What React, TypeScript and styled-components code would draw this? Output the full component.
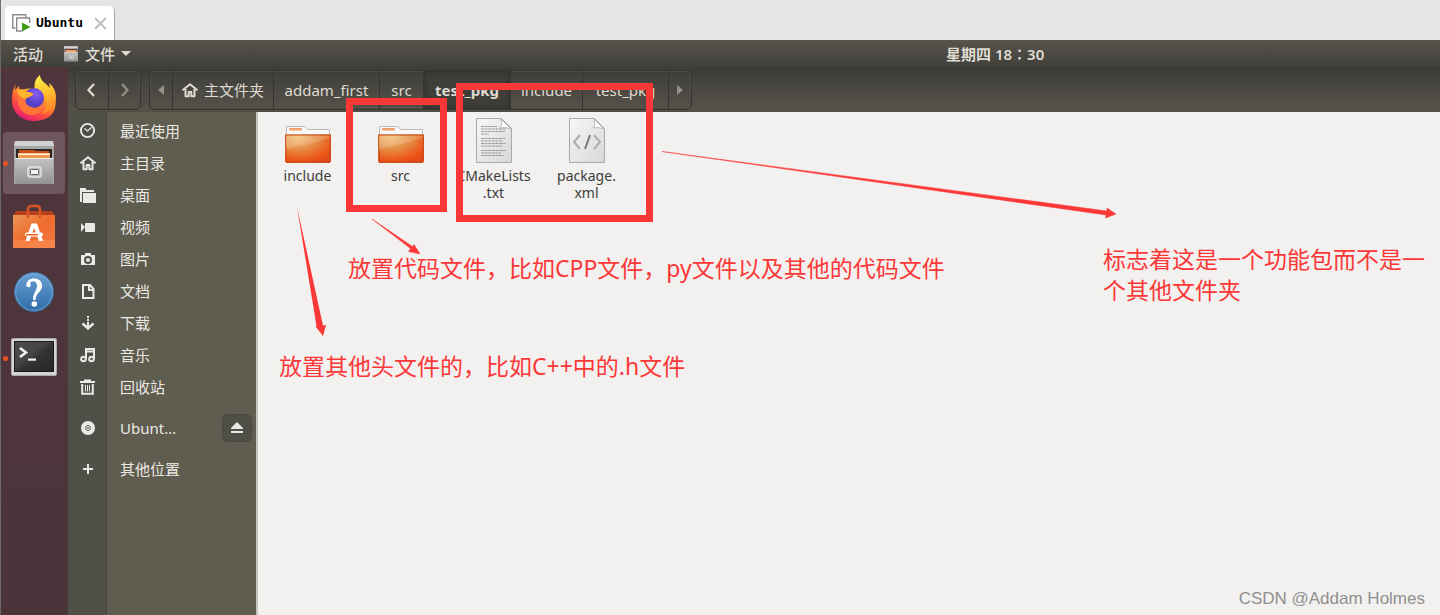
import React from "react";
import styled, { createGlobalStyle } from "styled-components";

const GlobalStyle = createGlobalStyle`
  * { box-sizing: border-box; }
  body { margin: 0; background: #f2f1ef; }
  button { border: 0; padding: 0; background: none; color: inherit; font: inherit; }
  svg { display: block; flex: none; overflow: visible; }
`;

const uiFont = `"Noto Sans", "Noto Sans CJK SC", sans-serif`;
const red = "#fc3737";

const Page = styled.div`
  position: relative;
  min-height: 100vh;
  display: flex;
  flex-direction: column;
  overflow: hidden;
  font: 15px/20px ${uiFont};
`;

const TabStrip = styled.div`
  height: 40px;
  padding: 6px 0 0 4px;
  display: flex;
  background: #e4e5e7;
  border-left: 1px solid #6e6e70;
`;

const Tab = styled.div`
  display: flex;
  align-items: center;
  width: 110px;
  padding: 0 8px 0 7px;
  background: #fff;
  border-right: 1px solid #a9aaac;
  border-radius: 5px 5px 0 0;
  color: #000;
  font: bold 13px/20px "DejaVu Sans Mono", monospace;
`;

const TabName = styled.span`
  flex: 1;
  margin-left: 4px;
`;

const Desktop = styled.div`
  flex: 1;
  display: flex;
  flex-direction: column;
  border-left: 1px solid #6a6864;
`;

const TopBar = styled.header`
  display: flex;
  align-items: center;
  height: 27px;
  background: linear-gradient(#57544b, #403f3b);
  color: #dfdbd2;
  font-weight: 500;
`;

const TopLeft = styled.div`
  display: flex;
  align-items: center;
  flex: 0 0 945px;
  padding-left: 12px;
  gap: 20px;
`;

const TopButton = styled.button`
  display: flex;
  align-items: center;
  gap: 6px;
  white-space: nowrap;
`;

const Clock = styled.time`
  font-weight: 600;
  white-space: nowrap;
`;

const Workspace = styled.div`
  flex: 1;
  display: flex;
`;

const Dock = styled.nav`
  flex: none;
  width: 67px;
  padding-left: 2px;
  display: flex;
  flex-direction: column;
  gap: 3px;
  background: linear-gradient(#50363c, #4b343a);
`;

const DockButton = styled.button<{ $open?: boolean; $active?: boolean }>`
  position: relative;
  display: flex;
  align-items: center;
  justify-content: center;
  width: 62px;
  height: 62px;
  border-radius: 4px;
  background: ${(p) => (p.$active ? "#6d575c" : "transparent")};
  &::before {
    content: "";
    display: ${(p) => (p.$open ? "block" : "none")};
    position: absolute;
    left: 0;
    width: 5px;
    height: 5px;
    border-radius: 50%;
    background: #e95420;
  }
`;

const FilesWindow = styled.section`
  flex: 1;
  min-width: 0;
  display: flex;
  flex-direction: column;
`;

const HeaderBar = styled.div`
  display: flex;
  gap: 8px;
  height: 45px;
  padding: 3px 7px;
  background: linear-gradient(#3d3c38, #56534b);
  border-bottom: 1px solid #4f4d46;
`;

const ButtonGroup = styled.div`
  display: flex;
  height: 40px;
  border: 1px solid #35342f;
  border-radius: 5px;
  box-shadow: inset 0 0 0 1px #504e46;
  overflow: hidden;
`;

const HeaderButton = styled.button<{ $width: number; $current?: boolean; $dim?: boolean }>`
  display: flex;
  align-items: center;
  justify-content: center;
  gap: 6px;
  width: ${(p) => p.$width}px;
  color: ${(p) => (p.$dim ? "#95928a" : "#dfdbd2")};
  background: ${(p) => (p.$current ? "#3e3d38" : "transparent")};
  box-shadow: ${(p) => (p.$current ? "inset 0 0 4px 1px #32312d" : "none")};
  font-weight: ${(p) => (p.$current ? 700 : 400)};
  white-space: nowrap;
  & + & { border-left: 1px solid #35342f; }
`;

const WindowBody = styled.div`
  flex: 1;
  display: flex;
`;

const Sidebar = styled.nav`
  flex: none;
  width: 190px;
  padding-top: 3px;
  display: flex;
  flex-direction: column;
  color: #ebe9e3;
  background: linear-gradient(90deg, #504f48 38px, #484740 38px, #484740 39px, #5f5c50 39px);
  border-right: 2px solid #c8c5c0;
`;

const PlaceRow = styled.div<{ $spaced?: boolean }>`
  display: flex;
  align-items: center;
  height: 32px;
  margin-top: ${(p) => (p.$spaced ? 9 : 0)}px;
  padding-right: 4px;
`;

const Place = styled.button`
  flex: 1;
  display: flex;
  align-items: center;
  gap: 24px;
  padding-left: 12px;
  text-align: left;
`;

const EjectButton = styled.button`
  display: flex;
  align-items: center;
  justify-content: center;
  width: 30px;
  height: 28px;
  border: 1px solid #46453e;
  border-radius: 6px;
  background: #504f47;
`;

const FileArea = styled.main`
  flex: 1;
  display: flex;
  align-items: flex-start;
  padding: 5px 3px;
  background: #f2f1ef;
  color: #3c3c3c;
  font-size: 14px;
`;

const FileItem = styled.button`
  display: flex;
  flex-direction: column;
  align-items: center;
  gap: 2px;
  width: 93px;
  line-height: 17px;
`;

const Frame = styled.div<{ $x: number; $y: number; $w: number; $h: number }>`
  position: absolute;
  left: ${(p) => p.$x}px;
  top: ${(p) => p.$y}px;
  width: ${(p) => p.$w}px;
  height: ${(p) => p.$h}px;
  border: 7px solid ${red};
  pointer-events: none;
`;

const Arrows = styled.svg`
  position: absolute;
  left: 0;
  top: 0;
  pointer-events: none;
`;

const Note = styled.p<{ $x: number; $y: number; $w?: number }>`
  position: absolute;
  left: ${(p) => p.$x}px;
  top: ${(p) => p.$y}px;
  width: ${(p) => (p.$w ? `${p.$w}px` : "max-content")};
  margin: 0;
  color: ${red};
  font: 23px/31px ${uiFont};
`;

const Watermark = styled.span`
  position: absolute;
  right: 15px;
  bottom: 4px;
  color: #8f8f90;
  font: 17px/24px "Liberation Sans", sans-serif;
`;

const TabIcon = () => (
  <svg width="20" height="20" viewBox="0 0 20 20" fill="none" stroke="#8b8b8b" strokeWidth="1.4">
    <path d="M3.5 15H.8V1.700h13v2.600" />
    <path d="M10 18H4.700V5h13v5" fill="#fff" />
    <path d="M10 9.500v9l8.500-4.500z" fill="#3f9c14" stroke="none" />
  </svg>
);

const CloseIcon = () => (
  <svg width="11" height="11" viewBox="0 0 11 11" stroke="#bdbdbd" strokeWidth="1.8">
    <path d="M0 0l11 11M11 0L0 11" />
  </svg>
);

const Cabinet = ({ size }: { size: number }) => (
  <svg width={size} height={size} viewBox="0 0 46 46">
    <defs>
      <linearGradient id="cab" x2="0" y2="1">
        <stop stopColor="#c4c4c4" />
        <stop offset="1" stopColor="#929292" />
      </linearGradient>
    </defs>
    <path d="M4 1h38l1 7v36H3V8z" fill="#a6a6a6" />
    <path d="M4 1h38l1 5H3z" fill="#d2d2d2" />
    <path d="M5 9h36v10H5z" fill="#2b2623" />
    <path d="M8 10h15l2 1h13v8H8z" fill="#c9501a" />
    <path d="M7 13h32v6H7z" fill="#ee9a50" />
    <path d="M7 13.500h32v1.500H7z" fill="#fff3e0" />
    <path d="M4 18h38v26H4z" fill="url(#cab)" />
    <path d="M4 18h38v1H4z" fill="#ececec" />
    <rect x="17" y="27" width="13" height="10" rx="2" fill="#b9b9b9" stroke="#e4e4e4" strokeWidth="1.5" />
    <rect x="19.500" y="29.500" width="8" height="5" rx="1" fill="#f4f4f4" stroke="#5e5e5e" strokeWidth="1" />
  </svg>
);

const Firefox = () => (
  <svg width="46" height="48" viewBox="0 0 46 48">
    <defs>
      <linearGradient id="ffBody" x1=".8" y1="0" x2=".25" y2="1">
        <stop offset=".1" stopColor="#fff04a" />
        <stop offset=".4" stopColor="#ffa127" />
        <stop offset=".7" stopColor="#ff4d41" />
        <stop offset="1" stopColor="#e3167d" />
      </linearGradient>
      <linearGradient id="ffTail" x2=".3" y2="1">
        <stop stopColor="#fff44f" />
        <stop offset=".6" stopColor="#ffbd2c" />
        <stop offset="1" stopColor="#ff8a2a" />
      </linearGradient>
      <radialGradient id="ffGlobe" cx=".6" cy=".3">
        <stop stopColor="#8c5cf5" />
        <stop offset="1" stopColor="#5440c4" />
      </radialGradient>
    </defs>
    <path d="M5 10c-1 3-1 4-1 6l4-4c0 2 1 4 2 5 4-3 8-3 13-2l3-10c2 4 7 7 10 11 8 3 10 10 8 18-2 8-10 13-21 13C10 47 1 38 1 26 1 20 2 14 5 10z" fill="url(#ffBody)" />
    <path d="M29 1c-5 4-6 9-5 13 6 1 10 5 12 10 2 7-1 13-7 16 10-1 16-8 16-17 0-6-3-11-7-14l1 5c-4-5-10-7-10-13z" fill="url(#ffTail)" />
    <circle cx="23" cy="24" r="10" fill="url(#ffGlobe)" />
    <path d="M5 18c5-3 8-3 11 0 3 0 5 1 6 2 1 2-5 3-7 5-2 3 1 7 5 8 4 2 9 1 13-4 0 7-5 12-12 12C12 41 7 34 7 26z" fill="#ff7538" />
    <path d="M6 17c4-3 8-2 10 1 3 0 6 1 6 2 0 2-5 2-8 5-3-1-6-3-8-8z" fill="#ffb42d" />
  </svg>
);

const Software = () => (
  <svg width="44" height="46" viewBox="0 1 44 46">
    <defs>
      <linearGradient id="bag" x2="1" y2="1">
        <stop stopColor="#e9955a" />
        <stop offset=".5" stopColor="#ee6c2c" />
        <stop offset="1" stopColor="#f37a42" />
      </linearGradient>
    </defs>
    <path d="M4 7h36l3 5H1z" fill="#b5401a" />
    <path d="M1 11h42v33H1z" fill="url(#bag)" />
    <path d="M1 36h42v8H1z" fill="#fa8d55" opacity=".6" />
    <path d="M16 14V6q0-4 3-4h6q3 0 3 4v8" fill="none" stroke="#d95422" strokeWidth="2.5" />
    <path d="M13.500 37l6-17.500h5.500l6 17.500h-4l-5-13-4.500 13z" fill="#fff" />
    <rect x="13" y="28.500" width="18" height="4" rx="2" fill="#fff" />
    <rect x="14" y="30" width="12" height="1.500" fill="#e8652a" />
  </svg>
);

const Help = () => (
  <svg width="42" height="42" viewBox="0 1 42 42">
    <defs>
      <linearGradient id="help" x2="0" y2="1">
        <stop stopColor="#6aa0d3" />
        <stop offset="1" stopColor="#2f6ca8" />
      </linearGradient>
    </defs>
    <circle cx="21" cy="21" r="19.500" fill="url(#help)" stroke="#3b6e9f" strokeWidth="1" />
    <circle cx="21" cy="21" r="18.300" fill="none" stroke="#8fb9e0" strokeWidth=".8" opacity=".7" />
    <path d="M13.500 13c1-4 4-5.500 7.500-5.500 5 0 8 2.800 8 7.500 0 6-6 6-6.500 14h-2.500c0-8 4-9 4-14 0-3-1.500-4.800-4-4.800-2 0-2.500.8-3 2z" fill="#fff" />
    <circle cx="15.500" cy="14" r="2.300" fill="#fff" />
    <circle cx="21.300" cy="33" r="2.800" fill="#fff" />
  </svg>
);

const Terminal = () => (
  <svg width="46" height="38" viewBox="0 1 46 38">
    <defs>
      <linearGradient id="term" x2="1" y2="1">
        <stop stopColor="#4b4b4b" />
        <stop offset=".42" stopColor="#464646" />
        <stop offset=".55" stopColor="#333" />
        <stop offset="1" stopColor="#262626" />
      </linearGradient>
    </defs>
    <rect x=".5" y=".5" width="45" height="37" rx="1.5" fill="#d4d4d4" stroke="#a9a9a9" />
    <rect x="3.500" y="3.500" width="39" height="30" fill="url(#term)" stroke="#181818" />
    <path d="M9 10l6 4.500L9 19" fill="none" stroke="#f2f2f2" strokeWidth="2.6" />
    <path d="M17 20.500h8v2.200h-8z" fill="#f2f2f2" />
  </svg>
);

const Folder = () => (
  <svg width="48" height="48" viewBox="0 0 48 48">
    <defs>
      <radialGradient id="fold" cx=".28" cy=".1" r="1">
        <stop stopColor="#f3c077" />
        <stop offset=".45" stopColor="#e58a42" />
        <stop offset=".8" stopColor="#ee5518" />
        <stop offset="1" stopColor="#df4a18" />
      </radialGradient>
    </defs>
    <path d="M2.500 18V9.500h18l3.500 3h21.500V18z" fill="#f8f8f8" stroke="#b9b9b9" />
    <rect x="5" y="11" width="13" height="2.500" rx="1" fill="#f0a06c" />
    <path d="M1 17.500h46V44q0 2-2 2H3q-2 0-2-2z" fill="url(#fold)" />
    <path d="M1.500 18h45L45.500 45h-43z" fill="none" stroke="#c4491c" />
    <path d="M2 18.500h44v2Q28 27 2 32z" fill="#fff" opacity=".17" />
  </svg>
);

const Document = ({ code }: { code?: boolean }) => (
  <svg width="48" height="48" viewBox="0 0 48 48">
    <defs>
      <linearGradient id="paper" x2="1" y2="1">
        <stop stopColor="#f7f7f7" />
        <stop offset="1" stopColor="#d8d8d8" />
      </linearGradient>
    </defs>
    <path d="M6.500 1.500h25l10 10v34h-35z" fill="url(#paper)" stroke="#a9a9a9" />
    <path d="M31 2c1 4 1 7-1 9 4-1 8 0 11 1z" fill="#fff" stroke="#aaa" strokeWidth=".8" />
    {code ? (
      <g fill="none" strokeWidth="2">
        <path d="M17 18l-6 7 6 7M31 18l6 7-6 7" stroke="#adadad" />
        <path d="M27 18l-5 14" stroke="#777" />
      </g>
    ) : (
      <path
        d="M11 9.500h16M11 12h25M11 14.500h24M11 17h8M11 21.500h25M11 24h22M11 26.500h25M11 29h22M11 33.500h25M11 36h20M11 38.500h23"
        stroke="#999"
        strokeWidth="1"
        strokeDasharray="3 .6"
      />
    )}
  </svg>
);

const HomeShape = () => (
  <>
    <path d="M3.500 7v7.200h3.200V10h2.600v4.200h3.200V7" fill="none" stroke="currentColor" strokeWidth="2" strokeLinejoin="round" />
    <path d="M.5 8.300L8 2.300l7.500 6" fill="none" stroke="currentColor" strokeWidth="2" />
  </>
);

const placeShapes: Record<string, React.ReactNode> = {
  recent: (
    <g fill="none" stroke="currentColor">
      <circle cx="7.500" cy="7.500" r="6.600" strokeWidth="1.9" />
      <path d="M4.500 5.500l3 2.500 4-3.500" strokeWidth="1.3" />
    </g>
  ),
  home: <HomeShape />,
  desktop: <path d="M0 1h6v2h8v2H2v10H0zM3 6h13v10H3z" fill="currentColor" />,
  video: <path d="M1 4l4 4-4 5zM6 4h8q1 0 1 1v7q0 1-1 1H6q-1 0-1-1V5q0-1 1-1z" fill="currentColor" />,
  photo: (
    <path
      fillRule="evenodd"
      fill="currentColor"
      d="M5 2h6v2h4v10H1V4h4zM8 5a4 4 0 100 8 4 4 0 000-8zm0 2a2 2 0 110 4 2 2 0 010-4z"
    />
  ),
  document: <path d="M3 2h7l3.500 4v9H3zM9 2v5h4" fill="none" stroke="currentColor" strokeWidth="2" />,
  download: (
    <g fill="none" stroke="currentColor" strokeWidth="2">
      <path d="M8 1v2M8 4v2M8 7v6" />
      <path d="M2.500 8.500L8 13.500l5.500-5" strokeWidth="2.4" />
    </g>
  ),
  music: (
    <g fill="none" stroke="currentColor" strokeWidth="2">
      <path d="M6 12V2h8v10M6 4.500h8" />
      <circle cx="3.500" cy="12" r="2.300" />
      <circle cx="11.500" cy="12" r="2.300" />
    </g>
  ),
  trash: (
    <g fill="none" stroke="currentColor">
      <path d="M0 3h15M4 1.500h7" strokeWidth="2" />
      <path d="M2.200 5v9.800h10.600V5" strokeWidth="2" />
      <path d="M5.500 6v6.500M7.500 6v6.500M9.500 6v6.500" />
    </g>
  ),
  disc: (
    <g>
      <circle cx="8" cy="8" r="7" fill="currentColor" />
      <circle cx="8" cy="8" r="2.500" fill="none" stroke="#66645c" />
      <circle cx="8" cy="8" r="1" fill="#66645c" />
    </g>
  ),
  plus: <path d="M3 8h10M8 3v10" stroke="currentColor" strokeWidth="2" />,
};

const SmallIcon = ({ name }: { name: string }) => (
  <svg width="16" height="16" viewBox="0 0 16 16">
    {placeShapes[name]}
  </svg>
);

const Chevron = ({ back }: { back?: boolean }) => (
  <svg width="12" height="14" viewBox="0 0 12 14" fill="none" stroke="currentColor" strokeWidth="2.2">
    <path d={back ? "M8 1L2.500 7L8 13" : "M3 1l5.500 6L3 13"} />
  </svg>
);

const Triangle = ({ back }: { back?: boolean }) => (
  <svg width="6" height="10" viewBox="0 0 6 10" fill="currentColor">
    <path d={back ? "M6 0v10L0 5z" : "M0 0v10l6-5z"} />
  </svg>
);

const places = [
  { icon: "recent", label: "最近使用" },
  { icon: "home", label: "主目录" },
  { icon: "desktop", label: "桌面" },
  { icon: "video", label: "视频" },
  { icon: "photo", label: "图片" },
  { icon: "document", label: "文档" },
  { icon: "download", label: "下载" },
  { icon: "music", label: "音乐" },
  { icon: "trash", label: "回收站" },
  { icon: "disc", label: "Ubunt…", spaced: true, eject: true },
  { icon: "plus", label: "其他位置", spaced: true },
];

const crumbs = [
  { label: "addam_first", width: 106 },
  { label: "src", width: 44 },
  { label: "test_pkg", width: 87, current: true },
  { label: "include", width: 72 },
  { label: "test_pkg", width: 86 },
];

export default function App() {
  return (
    <Page>
      <GlobalStyle />
      <TabStrip>
        <Tab>
          <TabIcon />
          <TabName>Ubuntu</TabName>
          <button aria-label="Close tab">
            <CloseIcon />
          </button>
        </Tab>
      </TabStrip>
      <Desktop>
        <TopBar>
          <TopLeft>
            <TopButton>活动</TopButton>
            <TopButton>
              <Cabinet size={16} />
              <span>文件</span>
              <svg width="10" height="5" viewBox="0 0 10 5" fill="currentColor">
                <path d="M0 0h10L5 5z" />
              </svg>
            </TopButton>
          </TopLeft>
          <Clock>星期四 18∶30</Clock>
        </TopBar>
        <Workspace>
          <Dock>
            <DockButton aria-label="Firefox"><Firefox /></DockButton>
            <DockButton aria-label="Files" $open $active><Cabinet size={46} /></DockButton>
            <DockButton aria-label="Software"><Software /></DockButton>
            <DockButton aria-label="Help"><Help /></DockButton>
            <DockButton aria-label="Terminal" $open><Terminal /></DockButton>
          </Dock>
          <FilesWindow>
            <HeaderBar>
              <ButtonGroup>
                <HeaderButton $width={32} aria-label="Back"><Chevron back /></HeaderButton>
                <HeaderButton $width={32} $dim aria-label="Forward"><Chevron /></HeaderButton>
              </ButtonGroup>
              <ButtonGroup>
                <HeaderButton $width={22} $dim aria-label="Scroll path left"><Triangle back /></HeaderButton>
                <HeaderButton $width={101}>
                  <SmallIcon name="home" />
                  主文件夹
                </HeaderButton>
                {crumbs.map((c, i) => (
                  <HeaderButton key={i} $width={c.width} $current={c.current}>{c.label}</HeaderButton>
                ))}
                <HeaderButton $width={23} $dim aria-label="Scroll path right"><Triangle /></HeaderButton>
              </ButtonGroup>
            </HeaderBar>
            <WindowBody>
              <Sidebar>
                {places.map((p) => (
                  <PlaceRow key={p.label} $spaced={p.spaced}>
                    <Place>
                      <SmallIcon name={p.icon} />
                      {p.label}
                    </Place>
                    {p.eject && (
                      <EjectButton aria-label="Eject">
                        <svg width="12" height="12" viewBox="0 0 12 12" fill="currentColor">
                          <path d="M6 0l6 6v1H0V6zM0 9h12v2H0z" />
                        </svg>
                      </EjectButton>
                    )}
                  </PlaceRow>
                ))}
              </Sidebar>
              <FileArea>
                <FileItem><Folder />include</FileItem>
                <FileItem><Folder />src</FileItem>
                <FileItem><Document /><span>CMakeLists<br />.txt</span></FileItem>
                <FileItem><Document code /><span>package.<br />xml</span></FileItem>
              </FileArea>
            </WindowBody>
          </FilesWindow>
        </Workspace>
      </Desktop>
      <Frame $x={346} $y={98} $w={101} $h={114} />
      <Frame $x={456} $y={83} $w={197} $h={139} />
      <Arrows width="1120" height="340" viewBox="0 0 1120 340" fill={red}>
        <path d="M297 207l19.500 119-1 .5 7.500 9.500 3-11-3 .5z" />
        <path d="M372 219l38.500 29.500-2 3L420 254l-6-9.500-1.500 2z" stroke={red} strokeWidth=".5" />
        <path d="M662 151.500l444 63.500-.5 3L1116 214l-9-6-.3 3z" stroke={red} strokeWidth=".5" />
      </Arrows>
      <Note $x={348} $y={253}>放置代码文件，比如CPP文件，py文件以及其他的代码文件</Note>
      <Note $x={279} $y={351}>放置其他头文件的，比如C++中的.h文件</Note>
      <Note $x={1103} $y={244} $w={330}>标志着这是一个功能包而不是一个其他文件夹</Note>
      <Watermark>CSDN @Addam Holmes</Watermark>
    </Page>
  );
}
